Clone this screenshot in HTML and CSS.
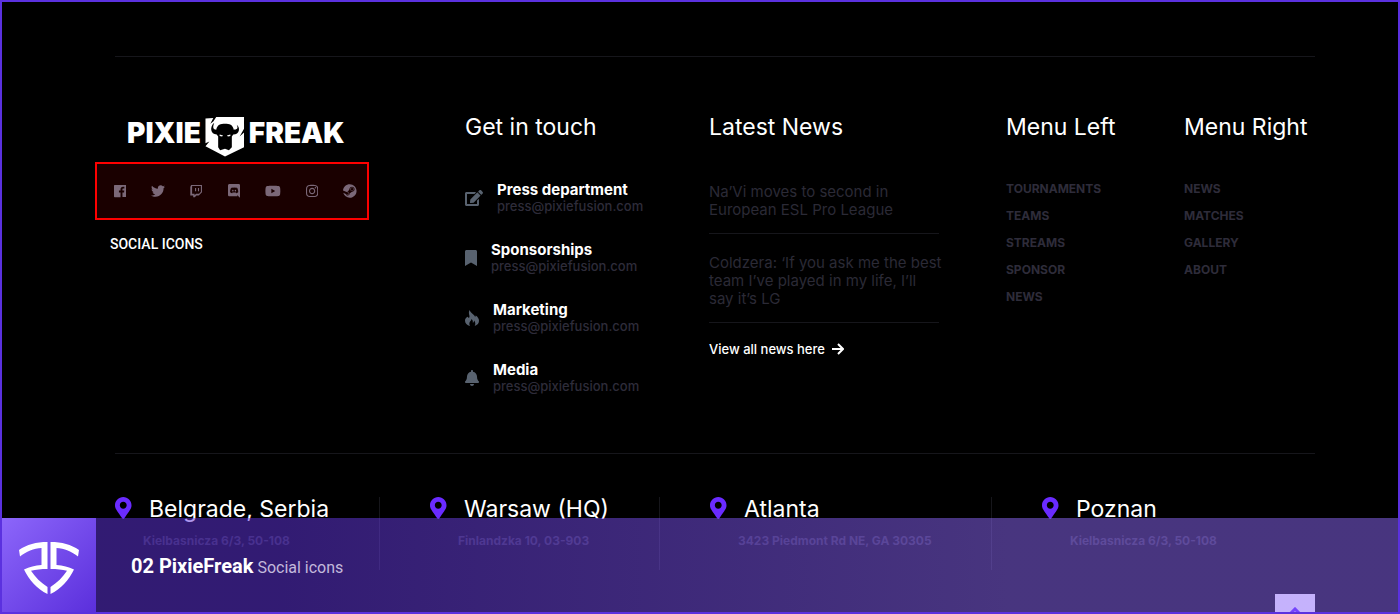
FILE: index.html
```html
<!DOCTYPE html>
<html lang="en">
<head>
<meta charset="utf-8">
<meta name="viewport" content="width=device-width, initial-scale=1">
<title>PixieFreak</title>
<link rel="stylesheet" href="styles.css">
</head>
<body>
<div class="frame">
  <footer class="footer">
    <div class="columns">
      <section class="brand">
        <a class="logo" href="#" aria-label="PixieFreak">
          <span>PIXIE</span>
          <svg class="logo-shield" viewBox="0 0 40 41" aria-hidden="true">
            <path fill="#fff" d="M0 1.500L8 1L5 7L8 4.500L11 0H39.500V12L35 20L39.500 16V31L20 40.500L0 30L4 25L0 27Z"/>
            <path fill="#000" d="M11 13C12 8 15.500 7 20 7S28 8 29 13C32 13 34 12 32 8C36 11 35 18 28.500 18L27 20V31L24 34L20 32.500L15 34L13 31V20L11.500 18C5 18 4 10 9 6C7 11 8 13 11 13Z"/>
            <path fill="#fff" d="M14.500 18L18 19L17 20L14.500 19.500ZM25.500 18L22 19L23 20L25.500 19.500Z"/>
          </svg>
          <span>FREAK</span>
        </a>
        <ul class="social">
          <li><a href="#" aria-label="Facebook"><svg viewBox="0 0 448 512"><path d="M448 56.700v398.500c0 13.700-11.100 24.700-24.700 24.700H309.100V306.500h58.200l8.700-67.600h-67v-43.200c0-19.600 5.400-32.900 33.500-32.900h35.800v-60.500c-6.200-.8-27.400-2.700-52.200-2.700-51.600 0-87 31.500-87 89.400v49.900h-58.400v67.600h58.400V480H24.700C11.100 480 0 468.900 0 455.300V56.700C0 43.100 11.100 32 24.700 32h398.500c13.700 0 24.800 11.100 24.800 24.700z"/></svg></a></li>
          <li><a href="#" aria-label="Twitter"><svg viewBox="0 0 512 512"><path d="M459.370 151.716c.325 4.548.325 9.097.325 13.645 0 138.720-105.583 298.558-298.558 298.558-59.452 0-114.680-17.219-161.137-47.106 8.447.974 16.568 1.299 25.340 1.299 49.055 0 94.213-16.568 130.274-44.832-46.132-.975-84.792-31.188-98.112-72.772 6.498.974 12.995 1.624 19.818 1.624 9.421 0 18.843-1.300 27.614-3.573-48.081-9.747-84.143-51.980-84.143-102.985v-1.299c13.969 7.797 30.214 12.670 47.431 13.319-28.264-18.843-46.781-51.005-46.781-87.391 0-19.492 5.197-37.360 14.294-52.954 51.655 63.675 129.300 105.258 216.365 109.807-1.624-7.797-2.599-15.918-2.599-24.040 0-57.828 46.782-104.934 104.934-104.934 30.213 0 57.502 12.670 76.670 33.137 23.715-4.548 46.456-13.320 66.599-25.340-7.798 24.366-24.366 44.833-46.132 57.827 21.117-2.273 41.584-8.122 60.426-16.243-14.292 20.791-32.161 39.308-52.628 54.253z"/></svg></a></li>
          <li><a href="#" aria-label="Twitch"><svg viewBox="0 0 448 512"><path d="M40.100 32L10 108.900v314.300h107V480h60.200l56.800-56.800h87l117-117V32H40.100zm357.800 254.100L331 353H224l-56.800 56.800V353H76.900V72.100h321v214zM331 149v116.900h-40.100V149H331zm-107 0v116.900h-40.100V149H224z"/></svg></a></li>
          <li><a href="#" aria-label="Discord"><svg viewBox="0 0 448 512"><path d="M297.216 243.200c0 15.616-11.520 28.416-26.112 28.416-14.336 0-26.112-12.800-26.112-28.416s11.520-28.416 26.112-28.416c14.592 0 26.112 12.800 26.112 28.416zm-119.552-28.416c-14.592 0-26.112 12.800-26.112 28.416s11.776 28.416 26.112 28.416c14.592 0 26.112-12.800 26.112-28.416.256-15.616-11.520-28.416-26.112-28.416zM448 52.736V512c-64.494-56.994-43.868-38.128-118.784-107.776l13.568 47.360H52.480C23.552 451.584 0 428.032 0 398.848V52.736C0 23.552 23.552 0 52.480 0h343.040C424.448 0 448 23.552 448 52.736zm-72.960 242.688c0-82.432-36.864-149.248-36.864-149.248-36.864-27.648-71.936-26.880-71.936-26.880l-3.584 4.096c43.520 13.312 63.744 32.512 63.744 32.512-60.811-33.329-132.244-33.335-191.232-7.424-9.472 4.352-15.104 7.424-15.104 7.424s21.248-20.224 67.328-33.536l-2.560-3.072s-35.072-.768-71.936 26.880c0 0-36.864 66.816-36.864 149.248 0 0 21.504 37.120 78.080 38.912 0 0 9.472-11.520 17.152-21.248-32.512-9.728-44.800-30.208-44.800-30.208 3.766 2.636 9.976 6.053 10.496 6.400 43.210 24.198 104.588 32.126 159.744 8.960 8.960-3.328 18.944-8.192 29.440-15.104 0 0-12.800 20.992-46.336 30.464 7.680 9.728 16.896 20.736 16.896 20.736 56.576-1.792 78.336-38.912 78.336-38.912z"/></svg></a></li>
          <li><a href="#" aria-label="YouTube"><svg viewBox="0 0 576 512"><path d="M549.655 124.083c-6.281-23.650-24.787-42.276-48.284-48.597C458.781 64 288 64 288 64S117.220 64 74.629 75.486c-23.497 6.322-42.003 24.947-48.284 48.597-11.412 42.867-11.412 132.305-11.412 132.305s0 89.438 11.412 132.305c6.281 23.650 24.787 41.500 48.284 47.821C117.220 448 288 448 288 448s170.780 0 213.371-11.486c23.497-6.321 42.003-24.171 48.284-47.821 11.412-42.867 11.412-132.305 11.412-132.305s0-89.438-11.412-132.305zm-317.510 213.508V175.185l142.739 81.205-142.739 81.201z"/></svg></a></li>
          <li><a href="#" aria-label="Instagram"><svg viewBox="0 0 448 512"><path d="M224.100 141c-63.600 0-114.900 51.300-114.900 114.900s51.300 114.900 114.900 114.900S339 319.500 339 255.900 287.700 141 224.100 141zm0 189.600c-41.100 0-74.700-33.500-74.700-74.700s33.500-74.700 74.700-74.700 74.700 33.500 74.700 74.700-33.600 74.700-74.700 74.700zm146.400-194.300c0 14.900-12 26.800-26.800 26.800-14.900 0-26.800-12-26.800-26.800s12-26.800 26.800-26.800 26.800 12 26.800 26.800zm76.100 27.200c-1.700-35.900-9.900-67.700-36.200-93.900-26.200-26.200-58-34.400-93.900-36.200-37-2.100-147.900-2.100-184.900 0-35.800 1.700-67.600 9.900-93.900 36.100s-34.400 58-36.200 93.900c-2.100 37-2.100 147.900 0 184.900 1.700 35.900 9.900 67.700 36.200 93.900s58 34.400 93.900 36.200c37 2.100 147.900 2.100 184.900 0 35.900-1.700 67.700-9.900 93.900-36.200 26.200-26.200 34.400-58 36.200-93.900 2.100-37 2.100-147.800 0-184.800zM398.800 388c-7.800 19.600-22.900 34.700-42.600 42.600-29.500 11.700-99.500 9-132.100 9s-102.700 2.600-132.100-9c-19.600-7.800-34.700-22.900-42.600-42.600-11.700-29.500-9-99.500-9-132.100s-2.600-102.700 9-132.100c7.800-19.600 22.900-34.700 42.600-42.600 29.500-11.700 99.500-9 132.100-9s102.700-2.600 132.100 9c19.600 7.800 34.700 22.900 42.600 42.600 11.700 29.500 9 99.500 9 132.100s2.700 102.700-9 132.100z"/></svg></a></li>
          <li><a href="#" aria-label="Steam"><svg viewBox="0 0 496 512"><path d="M496 256c0 137-111.200 248-248.400 248-113.800 0-209.600-76.300-239-180.400l95.200 39.300c6.400 32.100 34.900 56.400 68.900 56.400 39.200 0 71.900-32.400 70.200-73.500l84.500-60.200c52.100 1.300 95.800-40.900 95.800-93.500 0-51.600-42-93.500-93.700-93.500s-93.700 42-93.700 93.500v1.200L176.600 279c-15.500-.9-30.700 3.400-43.500 12.100L0 236.100C10.200 108.400 117.100 8 247.600 8 384.800 8 496 119 496 256zM155.700 384.300l-30.500-12.600a52.790 52.790 0 0 0 27.200 25.800c26.900 11.200 57.800-1.600 69-28.600 5.400-13 5.500-27.300.1-40.300-5.400-13-15.500-23.200-28.500-28.600-12.900-5.400-26.700-5.200-38.900-.6l31.500 13c19.800 8.200 29.200 30.900 20.900 50.700-8.300 19.900-31 29.200-50.800 21zm173.800-129.900c-34.400 0-62.400-28-62.400-62.300s28-62.300 62.400-62.300 62.400 28 62.400 62.300-27.900 62.300-62.400 62.300zm.1-15.600c25.900 0 46.900-21 46.900-46.800 0-25.900-21-46.800-46.900-46.800s-46.900 21-46.900 46.800c.1 25.800 21.100 46.800 46.900 46.800z"/></svg></a></li>
        </ul>
        <p class="callout">SOCIAL ICONS</p>
      </section>

      <section>
        <h2 class="heading">Get in touch</h2>
        <ul class="contacts">
          <li>
            <svg viewBox="0 0 576 512"><path d="M402.600 83.200l90.200 90.200c3.800 3.800 3.800 10 0 13.800L274.400 405.600l-92.800 10.300c-12.400 1.400-22.900-9.100-21.500-21.500l10.300-92.800L388.800 83.200c3.800-3.800 10-3.800 13.800 0zm162-22.900l-48.800-48.800c-15.200-15.200-39.900-15.200-55.200 0l-35.400 35.400c-3.800 3.800-3.800 10 0 13.800l90.200 90.200c3.800 3.800 10 3.800 13.800 0l35.400-35.400c15.200-15.300 15.200-40 0-55.200zM384 346.200V448H64V128h229.800c3.200 0 6.200-1.300 8.500-3.500l40-40c7.600-7.600 2.200-20.500-8.500-20.500H48C21.500 64 0 85.500 0 112v352c0 26.500 21.500 48 48 48h352c26.500 0 48-21.500 48-48V306.200c0-10.700-12.900-16-20.500-8.500l-40 40c-2.200 2.300-3.500 5.300-3.500 8.500z"/></svg>
            <div><h3>Press department</h3><a href="mailto:press@pixiefusion.com">press@pixiefusion.com</a></div>
          </li>
          <li>
            <svg viewBox="0 0 384 512"><path d="M0 512V48C0 21.490 21.490 0 48 0h288c26.510 0 48 21.490 48 48v464L192 400 0 512z"/></svg>
            <div><h3>Sponsorships</h3><a href="mailto:press@pixiefusion.com">press@pixiefusion.com</a></div>
          </li>
          <li>
            <svg viewBox="0 0 448 512"><path d="M150 0C165 60 200 95 265 140C310 172 318 200 322 222C336 208 342 190 342 172C410 215 448 275 448 345C448 430 400 485 310 508C345 455 335 385 290 335C288 375 275 395 250 405C255 355 240 320 210 290C205 345 130 375 138 445C141 472 150 492 165 508C60 490 0 430 0 345C0 275 40 235 95 215C95 235 105 250 125 258C185 200 80 110 150 0Z"/></svg>
            <div><h3>Marketing</h3><a href="mailto:press@pixiefusion.com">press@pixiefusion.com</a></div>
          </li>
          <li>
            <svg viewBox="0 0 448 512"><path d="M224 512c35.320 0 63.970-28.650 63.970-64H160.030c0 35.350 28.650 64 63.970 64zm215.390-149.710c-19.320-20.760-55.470-51.990-55.470-154.290 0-77.700-54.480-139.900-127.940-155.160V32c0-17.670-14.320-32-31.980-32s-31.980 14.330-31.980 32v20.840C118.560 68.100 64.080 130.300 64.080 208c0 102.300-36.150 133.530-55.470 154.290-6 6.450-8.660 14.160-8.610 21.710.11 16.400 12.980 32 32.100 32h383.800c19.120 0 32-15.600 32.100-32 .05-7.550-2.610-15.270-8.610-21.710z"/></svg>
            <div><h3>Media</h3><a href="mailto:press@pixiefusion.com">press@pixiefusion.com</a></div>
          </li>
        </ul>
      </section>

      <section>
        <h2 class="heading">Latest News</h2>
        <ul class="news">
          <li><a href="#">Na’Vi moves to second in<br>European ESL Pro League</a></li>
          <li><a href="#">Coldzera: ‘If you ask me the best<br>team I’ve played in my life, I’ll<br>say it’s LG</a></li>
        </ul>
        <a class="view-all" href="#">View all news here
          <svg viewBox="0 0 12 12" aria-hidden="true"><path d="M0 6H10M6 1L11 6L6 11" fill="none" stroke="#fff" stroke-width="2"/></svg>
        </a>
      </section>

      <nav aria-label="Menu Left">
        <h2 class="heading">Menu Left</h2>
        <ul class="menu">
          <li><a href="#">TOURNAMENTS</a></li>
          <li><a href="#">TEAMS</a></li>
          <li><a href="#">STREAMS</a></li>
          <li><a href="#">SPONSOR</a></li>
          <li><a href="#">NEWS</a></li>
        </ul>
      </nav>

      <nav aria-label="Menu Right">
        <h2 class="heading">Menu Right</h2>
        <ul class="menu">
          <li><a href="#">NEWS</a></li>
          <li><a href="#">MATCHES</a></li>
          <li><a href="#">GALLERY</a></li>
          <li><a href="#">ABOUT</a></li>
        </ul>
      </nav>
    </div>

    <div class="offices">
      <section class="office">
        <svg viewBox="0 0 384 512"><path d="M172.268 501.670C26.970 291.031 0 269.413 0 192 0 85.961 85.961 0 192 0s192 85.961 192 192c0 77.413-26.970 99.031-172.268 309.670-9.535 13.774-29.930 13.773-39.464 0zM192 272c44.183 0 80-35.817 80-80s-35.817-80-80-80-80 35.817-80 80 35.817 80 80 80z"/></svg>
        <h2>Belgrade, Serbia</h2>
        <p>Kielbasnicza 6/3, 50-108</p>
      </section>
      <section class="office">
        <svg viewBox="0 0 384 512"><path d="M172.268 501.670C26.970 291.031 0 269.413 0 192 0 85.961 85.961 0 192 0s192 85.961 192 192c0 77.413-26.970 99.031-172.268 309.670-9.535 13.774-29.930 13.773-39.464 0zM192 272c44.183 0 80-35.817 80-80s-35.817-80-80-80-80 35.817-80 80 35.817 80 80 80z"/></svg>
        <h2>Warsaw (HQ)</h2>
        <p>Finlandzka 10, 03-903</p>
      </section>
      <section class="office">
        <svg viewBox="0 0 384 512"><path d="M172.268 501.670C26.970 291.031 0 269.413 0 192 0 85.961 85.961 0 192 0s192 85.961 192 192c0 77.413-26.970 99.031-172.268 309.670-9.535 13.774-29.930 13.773-39.464 0zM192 272c44.183 0 80-35.817 80-80s-35.817-80-80-80-80 35.817-80 80 35.817 80 80 80z"/></svg>
        <h2>Atlanta</h2>
        <p>3423 Piedmont Rd NE, GA 30305</p>
      </section>
      <section class="office">
        <svg viewBox="0 0 384 512"><path d="M172.268 501.670C26.970 291.031 0 269.413 0 192 0 85.961 85.961 0 192 0s192 85.961 192 192c0 77.413-26.970 99.031-172.268 309.670-9.535 13.774-29.930 13.773-39.464 0zM192 272c44.183 0 80-35.817 80-80s-35.817-80-80-80-80 35.817-80 80 35.817 80 80 80z"/></svg>
        <h2>Poznan</h2>
        <p>Kielbasnicza 6/3, 50-108</p>
      </section>
    </div>
  </footer>

  <button class="to-top" type="button" aria-label="Back to top">
    <svg viewBox="0 0 14 9" aria-hidden="true"><path d="M1 8L7 2L13 8" fill="none" stroke="#5a1fff" stroke-width="3"/></svg>
  </button>

  <div class="banner">
    <div class="banner-mark">
      <svg viewBox="0 0 60 52" aria-hidden="true">
        <path fill="#fff" d="M28.500 0V27C22 27 17 27.500 12 28.800C16 35 22 41 28.500 45V52C18 47 10 38 5 27.500C10.500 25 16 23.500 22.500 23V6C15 6.500 7 9.500 1 14.500L0 8C8 2.500 17 0 28.500 0Z"/>
        <path fill="#fff" d="M31.500 0C43 0 52 2.500 60 8L59 14.500C53 9.500 45 6.500 37.500 6V23C44 23.500 49.500 25 55 27.500C50 38 42 47 31.500 52V45C38 41 44 35 48 28.800C43 27.500 38 27 31.500 27Z"/>
      </svg>
    </div>
    <p class="banner-title"><strong>02 PixieFreak</strong> <span>Social icons</span></p>
  </div>
</div>
</body>
</html>
```
FILE: styles.css
```css
* {
  box-sizing: border-box;
}

body,
h2,
h3,
p,
ul {
  margin: 0;
  padding: 0;
}

body {
  background: #000;
  color: #fff;
  font-family: Inter, "Open Sans", sans-serif;
}

ul {
  list-style: none;
}

a {
  color: inherit;
  text-decoration: none;
}

svg {
  display: block;
}

.frame {
  position: relative;
  height: 100vh;
  overflow: hidden;
  border: 2px solid #5b31df;
}

.footer {
  padding: 54px 83px 0 113px;
}

.columns {
  display: grid;
  grid-template-columns: 350fr 244fr 297fr 178fr 131fr;
  padding: 56px 0 58px;
  border-top: 1px solid #16161b;
  border-bottom: 1px solid #16161b;
}

.columns > * {
  min-width: 0;
}

.heading {
  margin-bottom: 40px;
  font-size: 23px;
  font-weight: 400;
  line-height: 28px;
  white-space: nowrap;
}

/* Brand */
.logo {
  display: flex;
  align-items: flex-start;
  gap: 4px;
  height: 41px;
  margin: 4px 0 4px 12px;
  font-size: 28px;
  font-weight: 900;
  line-height: 32px;
}

.logo-shield {
  width: 40px;
  height: 40px;
}

.social {
  display: flex;
  align-items: center;
  justify-content: space-between;
  width: 274px;
  height: 58px;
  margin-left: -20px;
  padding: 0 10px 0 17px;
  border: 2px solid #f00;
  background: #1a0000;
}

.social svg {
  height: 14px;
  fill: #7b6878;
}

.callout {
  margin: 16px 0 0 -5px;
  font-family: Roboto, sans-serif;
  font-size: 14px;
  font-weight: 500;
  line-height: 17px;
}

/* Contacts */
.contacts {
  display: grid;
  gap: 26px;
}

.contacts li {
  display: flex;
  align-items: center;
  gap: 14px;
  color: #2e2c3a;
  font-size: 13px;
  font-weight: 500;
  line-height: 17px;
}

.contacts svg {
  height: 16px;
  fill: #58626f;
}

.contacts h3 {
  color: #fff;
  font-size: 15px;
  font-weight: 700;
  line-height: 17px;
}

.contacts a {
  display: block;
}

/* News */
.news {
  width: 230px;
  color: #2b2a36;
  font-size: 15px;
  line-height: 18px;
}

.news li {
  padding: 20px 0 14px;
  border-bottom: 1px solid #16161b;
  white-space: nowrap;
}

.news li:first-child {
  padding-top: 2px;
}

.view-all {
  display: flex;
  align-items: center;
  gap: 7px;
  margin-top: 17px;
  font-size: 13px;
  font-weight: 500;
  line-height: 18px;
}

.view-all svg {
  width: 12px;
  height: 12px;
}

/* Menus */
.menu {
  display: grid;
  gap: 12px;
  color: #2e2c3a;
  font-size: 12px;
  font-weight: 700;
  line-height: 15px;
}

/* Offices */
.offices {
  display: grid;
  grid-template-columns: 265fr 280fr 332fr 323fr;
  padding-top: 43px;
}

.office {
  display: grid;
  grid-template-columns: 17px 1fr;
  align-content: start;
  column-gap: 17px;
  row-gap: 12px;
  height: 73px;
  border-right: 1px solid #16161b;
}

.office + .office {
  padding-left: 50px;
}

.office:last-child {
  border-right: 0;
}

.office svg {
  height: 22px;
  fill: #6a2bff;
}

.office h2 {
  font-size: 23px;
  font-weight: 400;
  line-height: 24px;
}

.office p {
  grid-column: 1 / -1;
  padding-left: 28px;
  color: #2e2c3a;
  font-size: 12px;
  font-weight: 700;
  line-height: 16px;
}

.to-top {
  position: absolute;
  right: 83px;
  bottom: -22px;
  display: flex;
  justify-content: center;
  width: 40px;
  height: 40px;
  padding: 13px 0 0;
  border: 0;
  background: #fff;
}

.to-top svg {
  width: 14px;
  height: 9px;
}

/* Caption bar laid over the footer */
.banner {
  position: absolute;
  right: 0;
  bottom: 0;
  left: 0;
  display: flex;
  align-items: center;
  gap: 35px;
  height: 94px;
  background: linear-gradient(90deg, rgba(98, 53, 225, 0.51) 20%, rgba(141, 104, 249, 0.51) 72%);
  font-family: Roboto, sans-serif;
}

.banner-mark {
  display: grid;
  place-items: center;
  width: 94px;
  height: 94px;
  padding-top: 6px;
  background: linear-gradient(135deg, #8c66fa, #5b2fdc);
}

.banner-mark svg {
  width: 60px;
  height: 52px;
}

.banner-title {
  padding-top: 4px;
  line-height: 24px;
}

.banner-title strong {
  font-size: 20px;
  font-weight: 700;
}

.banner-title span {
  color: #c3b9dc;
  font-size: 16px;
}
```
